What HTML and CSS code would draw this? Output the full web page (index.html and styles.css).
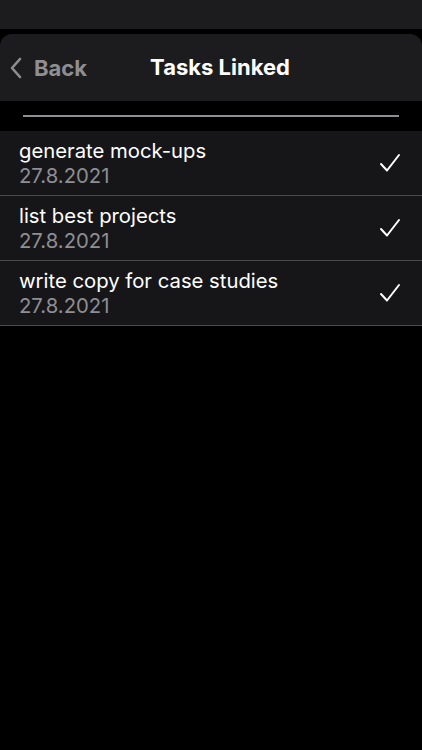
FILE: index.html
```html
<!DOCTYPE html>
<html lang="en">
<head>
  <meta charset="UTF-8" />
  <meta name="viewport" content="width=device-width, initial-scale=1.0"/>
  <title>Tasks Linked</title>
  <link rel="stylesheet" href="styles.css">
</head>
<body>

  <div class="status-bar"></div>

  <div class="sheet">
    <header class="nav">
      <a class="back" href="#">
        <svg width="14" height="22" viewBox="0 0 14 22"><path d="M11 2 L3 11 L11 20" fill="none" stroke="#8e8e93" stroke-width="2.6" stroke-linecap="round" stroke-linejoin="round"/></svg>
        <span>Back</span>
      </a>
      <h1>Tasks Linked</h1>
    </header>

    <div class="divider-wrap">
      <div class="divider"></div>
    </div>

    <ul class="tasks">
      <li class="task">
        <div class="task-text">
          <div class="task-title">generate mock-ups</div>
          <div class="task-date">27.8.2021</div>
        </div>
        <svg class="check" width="22" height="20" viewBox="0 0 22 20"><path d="M2 11 L8 17.5 L20 2" fill="none" stroke="#fff" stroke-width="2" stroke-linecap="round" stroke-linejoin="round"/></svg>
      </li>
      <li class="task">
        <div class="task-text">
          <div class="task-title">list best projects</div>
          <div class="task-date">27.8.2021</div>
        </div>
        <svg class="check" width="22" height="20" viewBox="0 0 22 20"><path d="M2 11 L8 17.5 L20 2" fill="none" stroke="#fff" stroke-width="2" stroke-linecap="round" stroke-linejoin="round"/></svg>
      </li>
      <li class="task">
        <div class="task-text">
          <div class="task-title">write copy for case studies</div>
          <div class="task-date">27.8.2021</div>
        </div>
        <svg class="check" width="22" height="20" viewBox="0 0 22 20"><path d="M2 11 L8 17.5 L20 2" fill="none" stroke="#fff" stroke-width="2" stroke-linecap="round" stroke-linejoin="round"/></svg>
      </li>
    </ul>
  </div>

</body>
</html>
```

FILE: styles.css
```css
body {
  font-family: Inter, 'Noto Sans', sans-serif;
  margin: 0;
  padding: 0;
  background: #000;
  color: #fff;
  width: 422px;
  height: 750px;
  overflow: hidden;
}
.status-bar {
  height: 29px;
  background: #1c1c1e;
}
.sheet {
  margin-top: 5px;
}
.nav {
  position: relative;
  height: 67px;
  background: #1c1c1e;
  border-radius: 12px 12px 0 0;
  display: flex;
  align-items: center;
  justify-content: center;
}
.back {
  position: absolute;
  left: 9px;
  top: 21px;
  display: flex;
  align-items: center;
  gap: 11px;
  color: #8e8e93;
  text-decoration: none;
  font-size: 22px;
  font-weight: 700;
}
.nav h1 {
  margin: 0 0 1px 18px;
  font-size: 22px;
  font-weight: 700;
}
.divider-wrap {
  height: 30px;
  display: flex;
  align-items: center;
  padding: 0 23px;
}
.divider {
  flex: 1;
  height: 2px;
  background: #8e8e93;
}
.tasks {
  list-style: none;
  margin: 0;
  padding: 0;
}
.task {
  height: 64px;
  background: #161619;
  border-bottom: 1px solid #4a4a4e;
  display: flex;
  align-items: center;
  padding: 0 21px 0 19px;
}
.task-text {
  flex: 1;
  margin-top: 0;
}
.task-title {
  font-size: 20.3px;
  line-height: 25px;
}
.task-date {
  font-size: 20.3px;
  line-height: 25px;
  color: #8e8e93;
}
.check {
  display: block;
}
```
